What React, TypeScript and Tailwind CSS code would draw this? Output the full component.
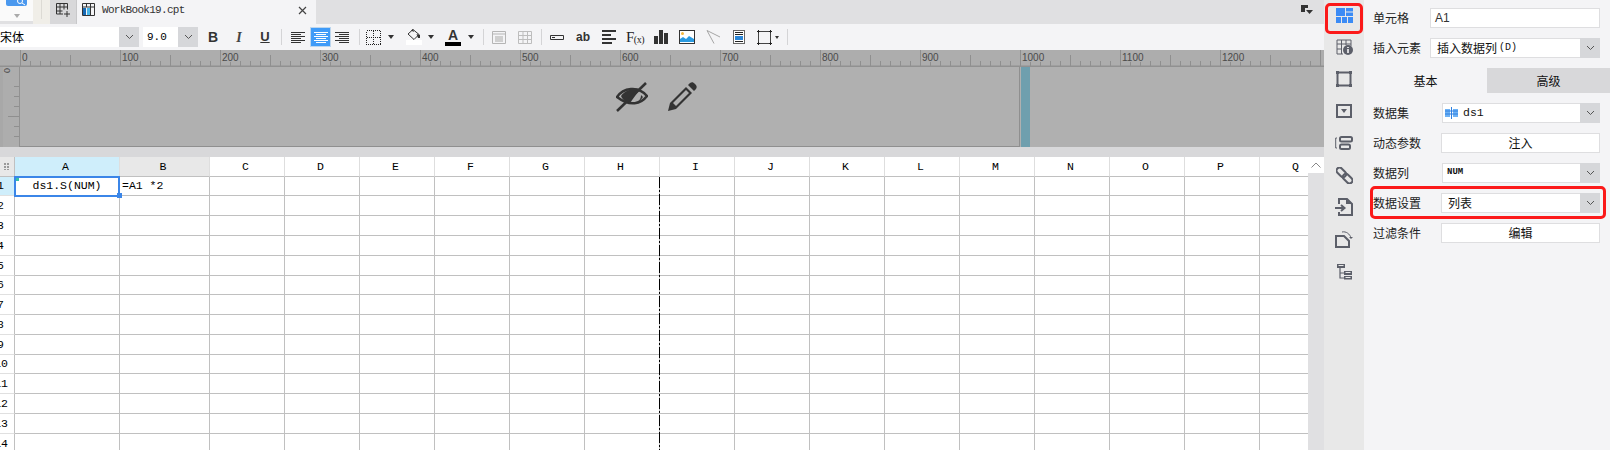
import { Fragment } from "react";

const cjk = "font-['Noto_Sans_CJK_SC','Noto_Sans',sans-serif]";
const mono = "font-['Liberation_Mono',monospace]";

const columns = [
  { name: "A", bg: "bg-[#cfeefb]" },
  { name: "B", bg: "bg-[#e8e8e8]" },
  ...["C", "D", "E", "F", "G", "H", "I", "J", "K", "L", "M", "N", "O", "P", "Q"].map((name) => ({ name, bg: "bg-white" })),
];
const rowHeights = ["h-[19px]", "h-[20px]", "h-[20px]", "h-[20px]", "h-[20px]", "h-[19px]", "h-[20px]", "h-[20px]", "h-[20px]", "h-[19px]", "h-[20px]", "h-[20px]", "h-[20px]", "h-[20px]"];

function Chevron({ className = "" }: { className?: string }) {
  return (
    <svg width="9" height="6" viewBox="0 0 9 6" className={className}>
      <path d="M1 1l3.5 3.5L8 1" fill="none" stroke="#555" strokeWidth="1" />
    </svg>
  );
}

function Caret({ className = "" }: { className?: string }) {
  return (
    <svg width="6" height="4" viewBox="0 0 6 4" className={`shrink-0 ${className}`}>
      <path d="M0 0h6L3 4z" fill="#333" />
    </svg>
  );
}

function Sep({ className = "" }: { className?: string }) {
  return <div className={`w-px h-[16px] bg-[#d4d4d6] shrink-0 ${className}`} />;
}

function Lines({ kind }: { kind: "left" | "center" | "right" }) {
  const stroke = kind === "center" ? "#fff" : "#333";
  const short = kind === "left" ? "M0 " : kind === "right" ? "M4 " : "M2 ";
  return (
    <svg width="14" height="11" viewBox="0 0 14 11" className="shrink-0">
      <path d={`M0 .5h14${short}2.5h10M0 4.5h14${short}6.5h10M0 8.5h14${short}10.5h10`} stroke={stroke} fill="none" />
    </svg>
  );
}

function Toolbar() {
  return (
    <div className="h-[26px] bg-[#f4f4f6] flex items-center shrink-0">
      <div className="w-[139px] h-5 flex shrink-0">
        <div className={`flex-1 bg-white text-[12px] leading-5 text-black ${cjk}`}>宋体</div>
        <div className="w-5 bg-[#d6d7da] flex items-center justify-center"><Chevron /></div>
      </div>
      <div className="ml-1 w-[55px] h-5 flex shrink-0">
        <div className={`flex-1 bg-white pl-1 text-[11px] leading-5 text-black ${mono}`}>9.0</div>
        <div className="w-5 bg-[#d6d7da] flex items-center justify-center"><Chevron /></div>
      </div>
      <div className="ml-[2px] w-[26px] text-center text-[14px] font-bold text-[#333] font-['Liberation_Sans',sans-serif] shrink-0">B</div>
      <div className="w-[26px] text-center text-[14px] font-bold italic text-[#444] font-['Liberation_Serif',serif] shrink-0">I</div>
      <div className="w-[26px] text-center text-[13px] font-bold underline text-[#333] font-['Liberation_Sans',sans-serif] shrink-0">U</div>
      <Sep className="ml-[3px]" />
      <div className="ml-[9px]"><Lines kind="left" /></div>
      <div className="ml-[5px] w-[21px] h-5 bg-[#3f9bf8] border border-[#bcd6ee] flex items-center justify-center shrink-0"><Lines kind="center" /></div>
      <div className="ml-1"><Lines kind="right" /></div>
      <Sep className="ml-[10px]" />
      <svg width="15" height="15" viewBox="0 0 15 15" className="ml-[6px] shrink-0" shapeRendering="crispEdges">
        <path d="M.5.5h14v14H.5zM7.5.5v14M.5 7.5h14" fill="none" stroke="#222" strokeDasharray="1 1" />
      </svg>
      <Caret className="ml-[7px]" />
      <div className="ml-[13px] w-[14px] shrink-0 flex flex-col items-center">
        <svg width="14" height="11" viewBox="0 0 14 11">
          <path d="M6 .5l6 5-5 5-6-5.5z" fill="none" stroke="#333" />
          <path d="M4 1.5L6 0l1 3zM9.5 5L13 6v3h-2z" fill="#333" />
        </svg>
        <div className="w-4 h-[5px] bg-white" />
      </div>
      <Caret className="ml-[7px]" />
      <div className="ml-[11px] w-4 shrink-0 flex flex-col items-center">
        <span className="text-[14px] leading-[12px] font-bold text-[#333] font-['Liberation_Sans',sans-serif]">A</span>
        <div className="w-4 h-1 bg-black mt-[1px]" />
      </div>
      <Caret className="ml-[7px]" />
      <Sep className="ml-[9px]" />
      <svg width="14" height="13" viewBox="0 0 14 13" className="ml-2 shrink-0">
        <path d="M.5.5h13v12H.5zM.5 3h13" fill="none" stroke="#b5b5b5" />
        <rect x="3" y="5" width="8" height="6" fill="#cfcfcf" />
      </svg>
      <svg width="14" height="13" viewBox="0 0 14 13" className="ml-3 shrink-0">
        <path d="M.5.5h13v12H.5zM.5 4.5h13M.5 8.5h13M5 .5v12M9.5.5v12" fill="none" stroke="#bdbdbd" />
      </svg>
      <Sep className="ml-[9px]" />
      <svg width="14" height="5" viewBox="0 0 14 5" className="ml-2 shrink-0">
        <path d="M.5.5h13v4H.5z" fill="none" stroke="#333" />
        <rect x="2" y="2" width="3" height="1" fill="#333" />
      </svg>
      <span className="ml-[13px] w-3 text-[12px] leading-none font-bold text-[#333] font-['Liberation_Sans',sans-serif] shrink-0 flex justify-center">ab</span>
      <svg width="14" height="14" viewBox="0 0 14 14" className="ml-[13px] shrink-0">
        <path d="M0 1h14M0 5h9M0 9h14M0 13h10" stroke="#333" strokeWidth="2" />
      </svg>
      <span className="ml-[11px] w-4 text-[15px] leading-none text-[#222] font-['Liberation_Serif',serif] shrink-0 flex justify-center whitespace-nowrap tracking-[-0.5px]">F<span className="text-[10px] self-end">(x)</span></span>
      <svg width="14" height="14" viewBox="0 0 14 14" className="ml-[11px] shrink-0">
        <path d="M0 6h4v8H0zM5 0h4v14H5zM10 3h4v11h-4z" fill="#333" />
      </svg>
      <svg width="16" height="14" viewBox="0 0 16 14" className="ml-[11px] shrink-0">
        <rect x=".5" y=".5" width="15" height="13" fill="#fff" stroke="#333" />
        <circle cx="3.5" cy="3.5" r="1.5" fill="#f6b73c" />
        <path d="M1 12V9l3-2 3 2 3-3 5 3v3z" fill="#2a9ae0" />
      </svg>
      <svg width="14" height="14" viewBox="0 0 14 14" className="ml-[11px] shrink-0">
        <path d="M14 7L1 .5l7 13" fill="none" stroke="#a5a5a5" />
      </svg>
      <svg width="12" height="14" viewBox="0 0 12 14" className="ml-[13px] shrink-0">
        <rect x=".5" y=".5" width="11" height="13" fill="#fff" stroke="#666" />
        <path d="M2 2.5h8M2 4.5h8M2 11.5h8" stroke="#222" />
        <rect x="2" y="6" width="8" height="4" fill="#2a86d8" />
      </svg>
      <svg width="15" height="15" viewBox="0 0 15 15" className="ml-3 shrink-0">
        <path d="M1.5 1.5h12v12h-12z" fill="none" stroke="#444" />
        <path d="M0 1.5h3M12 1.5h3M0 13.5h3M12 13.5h3M1.5 0v3M13.5 0v3M1.5 12v3M13.5 12v3" stroke="#222" />
      </svg>
      <svg width="4" height="3" viewBox="0 0 4 3" className="ml-[3px] shrink-0"><path d="M0 0h4L2 3z" fill="#333" /></svg>
      <Sep className="ml-2" />
    </div>
  );
}

function TabBar() {
  return (
    <div className="h-6 bg-[#e0e0e2] flex shrink-0 relative">
      <div className="w-[33px] h-[21px] bg-[#fafafa] flex flex-col items-center shrink-0">
        <svg width="21" height="6" viewBox="0 0 21 6" className="mr-[1px]">
          <path d="M0 0h21v4a2 2 0 0 1-2 2H2a2 2 0 0 1-2-2z" fill="#4a98ee" />
          <circle cx="14" cy="1" r="2.5" fill="none" stroke="#fff" />
          <path d="M16 3l3 2" stroke="#fff" />
        </svg>
        <svg width="6" height="4" viewBox="0 0 6 4" className="mt-2"><path d="M0 0h6L3 4z" fill="#aaa" /></svg>
      </div>
      <div className="w-[17px] bg-[#f0eee8] shrink-0 flex justify-center"><div className="w-px h-[19px] bg-[#dcdad4]" /></div>
      <div className="w-[26px] bg-[#d8d8da] flex items-start justify-center pt-[3px] shrink-0">
        <svg width="14" height="14" viewBox="0 0 14 14">
          <path d="M.5 11V.5h11v6M.5 4h11M.5 8h6M4 .5V11M8 .5v6M.5 11H7" fill="none" stroke="#333" />
          <path d="M11 8v6M8 11h6" stroke="#333" />
        </svg>
      </div>
      <div className="w-[240px] bg-[#f4f4f6] border-l border-[#c8c8ca] flex items-start pt-[3px] pl-[5px] shrink-0">
        <svg width="13" height="13" viewBox="0 0 13 13" className="shrink-0">
          <path d="M.5.5h12v12H.5zM.5 4h12M4.5.5V4M8.5.5v12M.5 8h3" fill="none" stroke="#333" />
          <rect x="1" y="5" width="3" height="7" fill="#1668b4" />
          <rect x="5" y="5" width="3" height="7" fill="#47b4e8" />
        </svg>
        <span className={`ml-[7px] text-[11px] leading-[14px] tracking-[-0.7px] text-[#333] ${mono}`}>WorkBook19.cpt</span>
        <svg width="9" height="9" viewBox="0 0 9 9" className="ml-[113px] mt-[3px] shrink-0">
          <path d="M1 1l7 7M8 1L1 8" stroke="#444" strokeWidth="1.2" />
        </svg>
      </div>
      <svg width="12" height="10" viewBox="0 0 12 10" className="absolute left-[1301px] top-[5px]">
        <path d="M0 0h7v3H4v4H0z" fill="#333" />
        <path d="M5 5h7L8.5 9z" fill="#333" />
      </svg>
    </div>
  );
}

function Ruler() {
  const ticks = Array.from({ length: 131 }, (_, i) => i);
  return (
    <svg width="1324" height="17" className="block shrink-0">
      <rect width="1324" height="17" fill="#adadad" />
      {ticks.map((i) => {
        const x = 20.5 + i * 10;
        const top = i % 10 === 0 ? 0 : i % 5 === 0 ? 5 : 11;
        return <line key={i} x1={x} x2={x} y1={top} y2={16} stroke="#8f8f8f" />;
      })}
      {Array.from({ length: 13 }, (_, i) => (
        <text key={i} x={22 + i * 100} y={11} fontSize="10" fill="#4a4a4a" fontFamily="Liberation Sans, sans-serif" stroke="#adadad" strokeWidth="2" paintOrder="stroke">
          {i * 100}
        </text>
      ))}
      <rect y="15.5" width="1324" height="1.5" fill="#919191" />
    </svg>
  );
}

function Preview() {
  return (
    <div className="h-[80px] bg-[#b0b0b0] flex shrink-0 relative">
      <div className="w-[20px] h-full bg-[#adadad] shrink-0 border-r border-[#919191] border-l-[3px] border-l-[#a8a8a8]">
        <svg width="16" height="80" className="block">
          {Array.from({ length: 6 }, (_, i) => (
            <line key={i} x1={i === 3 ? 5 : 11} x2="16" y1={i * 10 + 19.5} y2={i * 10 + 19.5} stroke="#8f8f8f" />
          ))}
          <text fontSize="9" fill="#4a4a4a" fontFamily="Liberation Sans, sans-serif" transform="translate(1,1) rotate(90)">0</text>
        </svg>
      </div>
      <div className="w-[1000px] border-r border-b border-[#8f8f8f] shrink-0" />
      <div className="w-[9px] bg-[#6f9fae] shrink-0 ml-px" />
      {/* hidden-row and edit markers sit over the preview */}
      <div className="absolute left-[616px] top-[15px] flex items-start gap-[19px]">
        <svg width="32" height="30" viewBox="0 0 32 30">
          <path d="M1 15C7 6 22 3 31 14c-6 8-17 11-30 1z" fill="none" stroke="#333" strokeWidth="2.5" />
          <path d="M5 14C9 8 17 6 24 7l-10 14C9 20 7 18 5 14z" fill="#333" />
          <path d="M20 20c3-1 5-3 5-7l2 2c-2 3-4 5-7 5z" fill="#333" />
          <path d="M1 29L30 1" stroke="#333" strokeWidth="2.5" />
        </svg>
        <svg width="30" height="30" viewBox="0 0 30 30">
          <path d="M1 29l2-8L19 5l6 6L9 27z" fill="#333" />
          <path d="M6 21L19 8l3 3L9 24z" fill="#b0b0b0" />
          <path d="M21 3l2-2c2-1 3-1 5 1s2 3 1 5l-2 2z" fill="#333" />
        </svg>
      </div>
    </div>
  );
}

function Sheet() {
  return (
    <div className="flex-1 flex min-h-0 relative">
      <div className="w-[1308px] overflow-hidden shrink-0">
        <div className={`grid grid-cols-[15px_105px_90px_repeat(15,75px)] w-[1334px] text-black text-[11.5px] ${mono}`}>
          <div className="h-[20px] bg-[#e8e8e8] border-b border-[#c0c0c0] border-r flex items-center justify-center">
            <svg width="7" height="7" viewBox="0 0 7 7">
              <path d="M0 0h2v2H0zM3 0h2v2H3zM0 3h2v2H0zM3 3h2v2H3zM0 6h2v1H0zM3 6h2v1H3z" fill="#999" />
            </svg>
          </div>
          {columns.map((c) => (
            <div key={c.name} className={`h-[20px] ${c.bg} border-b border-[#c0c0c0] border-r border-r-[#dedede] flex items-center justify-center pr-[3px]`}>
              {c.name}
            </div>
          ))}
          {rowHeights.map((h, r) => (
            <Fragment key={r}>
              <div className={`${h} ${r === 0 ? "bg-[#cfeefb]" : "bg-white"} border-r border-b border-[#c0c0c0] border-b-[#e0e0e0] flex items-center justify-end overflow-hidden ${r < 9 ? "pr-[10px]" : "pr-[6px]"}`}>
                {r + 1}
              </div>
              {columns.map((c, i) => (
                <div key={c.name} className={`${h} border-r border-b border-[#c0c0c0] bg-white flex items-center whitespace-nowrap overflow-hidden ${i === 0 ? "justify-center" : "pl-[2px]"}`}>
                  {r === 0 && i === 0 ? "ds1.S(NUM)" : r === 0 && i === 1 ? "=A1 *2" : ""}
                </div>
              ))}
            </Fragment>
          ))}
        </div>
      </div>
      <div className="w-4 bg-[#e0e0e2] shrink-0">
        <div className="h-4 bg-white flex items-center justify-center">
          <svg width="10" height="6" viewBox="0 0 10 6"><path d="M.5 5.5L5 1l4.5 4.5" fill="none" stroke="#888" /></svg>
        </div>
      </div>
      {/* selected cell A1 */}
      <div className="absolute left-[14px] top-[19px] w-[106px] h-[21px] border-2 border-[#3b86e8]" />
      <div className="absolute left-[117px] top-[36px] w-[5px] h-[5px] bg-[#3b86e8]" />
      <div className="absolute left-[16px] top-[21px] w-[3px] h-[3px] bg-[#35c0a8]" />
      {/* page break */}
      <svg width="1" height="274" className="absolute left-[659px] top-[20px]">
        <line x1=".5" x2=".5" y1="0" y2="274" stroke="#000" strokeDasharray="11 2 2 2" />
      </svg>
    </div>
  );
}

function Sidebar() {
  const c = "#5c5f69";
  return (
    <div className="w-10 bg-[#e8e8e8] shrink-0 flex flex-col items-center -mt-px">
      <div className="h-8 flex items-center justify-center">
        <svg width="17" height="15" viewBox="0 0 17 15">
          <path d="M0 0h9v8H0zM10 0h7v3.5h-7zM10 4.5h7V8h-7zM0 9h5v6H0zM6 9h5v6H6zM12 9h5v6h-5z" fill="#3b8bf5" />
        </svg>
      </div>
      <div className="h-8 flex items-center justify-center">
        <svg width="17" height="16" viewBox="0 0 17 16">
          <path d="M7 15H1V1h14v6M1 5h14M5.5 1v14M10 1v5M1 10h5" fill="none" stroke={c} />
          <circle cx="12" cy="11" r="5" fill={c} />
          <path d="M12 8v1M12 10v4" stroke="#fff" strokeWidth="1.5" />
        </svg>
      </div>
      <div className="h-8 flex items-center justify-center">
        <svg width="16" height="16" viewBox="0 0 16 16">
          <path d="M1.5 1.5h13v13h-13z" fill="none" stroke={c} strokeWidth="2" />
          <path d="M0 0h3v3H0zM13 0h3v3h-3zM0 13h3v3H0zM13 13h3v3h-3z" fill={c} />
        </svg>
      </div>
      <div className="h-8 flex items-center justify-center">
        <svg width="16" height="14" viewBox="0 0 16 14">
          <path d="M1 1h14v12H1z" fill="none" stroke={c} strokeWidth="2" />
          <path d="M5 5h6L8 9z" fill={c} />
        </svg>
      </div>
      <div className="h-8 flex items-center justify-center">
        <svg width="18" height="14" viewBox="0 0 18 14">
          <path d="M2 2H0.7v10H2" fill="none" stroke={c} />
          <rect x="5" y="1" width="12" height="4.5" rx="1.5" fill="none" stroke={c} strokeWidth="2" />
          <rect x="5" y="8.5" width="10" height="4.5" rx="1.5" fill="none" stroke={c} strokeWidth="2" />
        </svg>
      </div>
      <div className="h-8 flex items-center justify-center">
        <svg width="17" height="17" viewBox="0 0 17 17">
          <g transform="rotate(45 8.5 8.5)" fill="none" stroke={c} strokeWidth="2">
            <rect x="-1.5" y="5.5" width="11" height="6" rx="3" />
            <rect x="7.5" y="5.5" width="11" height="6" rx="3" />
          </g>
        </svg>
      </div>
      <div className="h-8 flex items-center justify-center">
        <svg width="18" height="18" viewBox="0 0 18 18">
          <path d="M4 6V1h8l5 5v11H4v-3" fill="none" stroke={c} strokeWidth="2" />
          <path d="M11 1v5h6z" fill={c} />
          <path d="M0 10h9M6 7l3.5 3L6 13" fill="none" stroke={c} strokeWidth="2" />
        </svg>
      </div>
      <div className="h-8 flex items-center justify-center">
        <svg width="18" height="18" viewBox="0 0 18 18">
          <path d="M1 6h8l5 5v6H1z" fill="none" stroke={c} strokeWidth="2" />
          <path d="M7 2c4-1 8 2 9 6" fill="none" stroke={c} />
          <path d="M14 7l2 2 2-2z" fill={c} />
        </svg>
      </div>
      <div className="h-8 flex items-center justify-center">
        <svg width="17" height="17" viewBox="0 0 17 17">
          <path d="M1 1h8v4H1zM8 8h8v4H8zM8 13h8v3.5H8z" fill={c} />
          <path d="M4 5v10h4M4 10h4" fill="none" stroke={c} strokeWidth="1.2" />
          <path d="M2.5 2.5h5M9.5 9.5h5M9.5 14.5h5" stroke="#e8e8e8" />
        </svg>
      </div>
    </div>
  );
}

function Field({ label, children, className = "" }: { label: string; children: React.ReactNode; className?: string }) {
  return (
    <div className={`flex items-center h-5 pl-[9px] pr-[10px] ${className}`}>
      <span className={`text-[12px] text-[#222] whitespace-nowrap ${cjk}`}>{label}</span>
      {children}
    </div>
  );
}

function SelectBox({ className = "", children }: { className?: string; children: React.ReactNode }) {
  return (
    <div className={`h-5 flex border border-[#dedee0] bg-white ${className}`}>
      <div className={`flex-1 flex items-center pl-1 text-[12px] text-[#111] ${cjk}`}>{children}</div>
      <div className="w-5 -my-px -mr-px bg-[#d6d7da] flex items-center justify-center"><Chevron /></div>
    </div>
  );
}

function ButtonBox({ children }: { children: React.ReactNode }) {
  return (
    <div className={`ml-[20px] flex-1 h-5 bg-white border border-[#dedee0] flex items-center justify-center text-[12px] text-[#111] ${cjk}`}>
      {children}
    </div>
  );
}

function Panel() {
  return (
    <div className="flex-1 bg-[#f4f4f6] flex flex-col pt-2">
      <Field label="单元格">
        <div className="ml-[21px] flex-1 h-5 bg-white border border-[#dedee0] flex items-center pl-1 text-[12px] text-[#333] font-['Liberation_Sans',sans-serif]">A1</div>
      </Field>
      <Field label="插入元素" className="mt-[10px]">
        <SelectBox className="ml-[9px] flex-1">
          <span className="pl-[2px]">插入数据列</span>
          <span className={`ml-[2px] text-[10px] leading-none ${mono}`}>(D)</span>
        </SelectBox>
      </Field>
      <div className={`flex h-[25px] mt-[10px] text-[12px] text-[#111] ${cjk}`}>
        <div className="w-[123px] flex items-center justify-center">基本</div>
        <div className="flex-1 bg-[#d8d8da] flex items-center justify-center">高级</div>
      </div>
      <Field label="数据集" className="mt-[10px]">
        <SelectBox className="ml-[33px] flex-1">
          <svg width="13" height="12" viewBox="0 0 13 12" className="shrink-0 -ml-[2px] mr-[5px]">
            <path d="M0 2h5v8H0zM8 2h5v8H8z" fill="#6eb2f5" />
            <path d="M6.5 0v12M0 4h13M0 7h13" stroke="#2d7fe0" />
          </svg>
          <span className={`text-[11.5px] ${mono}`}>ds1</span>
        </SelectBox>
      </Field>
      <Field label="动态参数" className="mt-[10px]">
        <ButtonBox>注入</ButtonBox>
      </Field>
      <Field label="数据列" className="mt-[10px]">
        <SelectBox className="ml-[33px] flex-1">
          <span className={`text-[9px] font-bold ${mono}`}>NUM</span>
        </SelectBox>
      </Field>
      <Field label="数据设置" className="mt-[10px]">
        <SelectBox className="ml-[20px] flex-1">
          <span className="pl-[2px]">列表</span>
        </SelectBox>
      </Field>
      <Field label="过滤条件" className="mt-[10px]">
        <ButtonBox>编辑</ButtonBox>
      </Field>
    </div>
  );
}

export default function App() {
  return (
    <div className="w-[1610px] h-[450px] flex overflow-hidden relative bg-white">
      <div className="w-[1324px] flex flex-col shrink-0">
        <TabBar />
        <Toolbar />
        <Ruler />
        <Preview />
        <div className="h-[10px] bg-[#d8d8da] shrink-0" />
        <Sheet />
      </div>
      <Sidebar />
      <Panel />
      {/* red annotations */}
      <div className="absolute left-[1325px] top-[3px] w-[38px] h-[31px] border-[3px] border-[#fb1a1a] rounded-[5px]" />
      <div className="absolute left-[1370px] top-[186px] w-[236px] h-[33px] border-[3px] border-[#fb1a1a] rounded-[5px]" />
    </div>
  );
}
